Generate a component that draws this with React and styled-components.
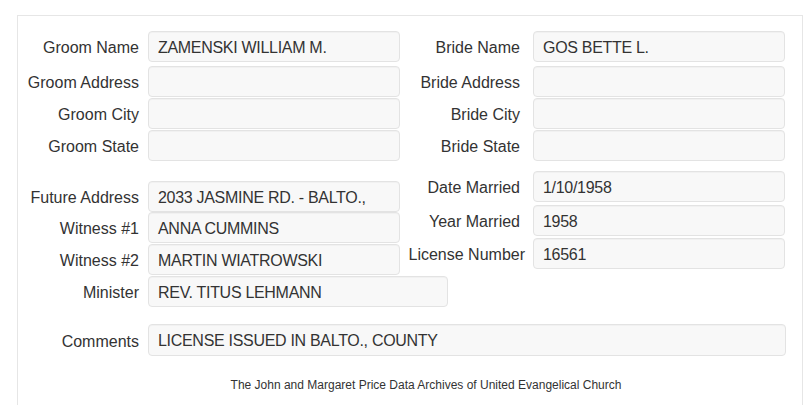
import React from "react";
import styled, { createGlobalStyle } from "styled-components";

const Global = createGlobalStyle`
  html, body { margin: 0; padding: 0; background: #fff; }
  body { font-family: "Liberation Sans", Arial, sans-serif; color: #333; overflow: hidden; }
  * { box-sizing: border-box; }
`;

const Panel = styled.div`
  margin: 15px 0 0 17px;
  width: 786px;
  height: 420px;
  border: 1px solid #e6e6e6;
  padding-top: 15px;
`;

const TwoCols = styled.div`
  display: grid;
  grid-template-columns: 382px 1fr;
  align-items: start;
  margin-top: ${(p) => p.$top || 0}px;
`;

const Column = styled.div`
  display: flex;
  flex-direction: column;
  padding-top: ${(p) => p.$pad || 0}px;
`;

const Field = styled.div`
  display: flex;
  align-items: center;
  margin-top: ${(p) => p.$gap || 0}px;
`;

const Label = styled.div`
  flex: 0 0 auto;
  width: ${(p) => p.$w}px;
  margin-right: ${(p) => p.$mr}px;
  text-align: right;
  font-size: 16px;
  white-space: nowrap;
  color: #333;
  padding-top: 3px;
`;

const Value = styled.div`
  flex: 0 0 auto;
  width: ${(p) => p.$w}px;
  height: ${(p) => p.$h || 31}px;
  border: 1px solid #e3e3e3;
  border-radius: 4px;
  background: #f8f8f8;
  box-shadow: inset 0 1px 1px rgba(0, 0, 0, 0.03);
  padding: 2px 8px 0 9px;
  display: flex;
  align-items: center;
  font-size: 16px;
  letter-spacing: -0.3px;
  color: #333;
  white-space: nowrap;
  overflow: hidden;
`;

const Footer = styled.div`
  margin-top: 22px;
  padding-left: 32px;
  text-align: center;
  font-size: 12px;
  color: #333;
`;

const Row = ({ side, label, value, gap, width, nudge, h }) => {
  const left = side === "left";
  const lw = left ? 121 : 120 + (nudge || 0);
  const mr = left ? 9 : 13 - (nudge || 0);
  return (
    <Field $gap={gap}>
      <Label $w={lw} $mr={mr}>
        {label}
      </Label>
      <Value $w={width || 252} $h={h}>{value}</Value>
    </Field>
  );
};

export default function App() {
  return (
    <>
      <Global />
      <Panel>
        <TwoCols>
          <Column>
            <Row side="left" label="Groom Name" value="ZAMENSKI WILLIAM M." />
            <Row side="left" label="Groom Address" value="" gap={4} />
            <Row side="left" label="Groom City" value="" gap={1} />
            <Row side="left" label="Groom State" value="" gap={1} />
          </Column>
          <Column>
            <Row side="right" label="Bride Name" value="GOS BETTE L." />
            <Row side="right" label="Bride Address" value="" gap={4} />
            <Row side="right" label="Bride City" value="" gap={1} />
            <Row side="right" label="Bride State" value="" gap={1} />
          </Column>
        </TwoCols>
        <TwoCols $top={10}>
          <Column $pad={10}>
            <Row side="left" label="Future Address" value="2033 JASMINE RD. - BALTO.," />
            <Row side="left" label="Witness #1" value="ANNA CUMMINS" gap={0} />
            <Row side="left" label="Witness #2" value="MARTIN WIATROWSKI" gap={1} />
            <Row side="left" label="Minister" value="REV. TITUS LEHMANN" gap={1} width={300} />
          </Column>
          <Column>
            <Row side="right" label="Date Married" value="1/10/1958" />
            <Row side="right" label="Year Married" value="1958" gap={3} />
            <Row side="right" label="License Number" value="16561" gap={2} nudge={5} />
          </Column>
        </TwoCols>
        <Field $gap={17}>
          <Label $w={121} $mr={9}>
            Comments
          </Label>
          <Value $w={638} $h={32}>LICENSE ISSUED IN BALTO., COUNTY</Value>
        </Field>
        <Footer>The John and Margaret Price Data Archives of United Evangelical Church</Footer>
      </Panel>
    </>
  );
}
